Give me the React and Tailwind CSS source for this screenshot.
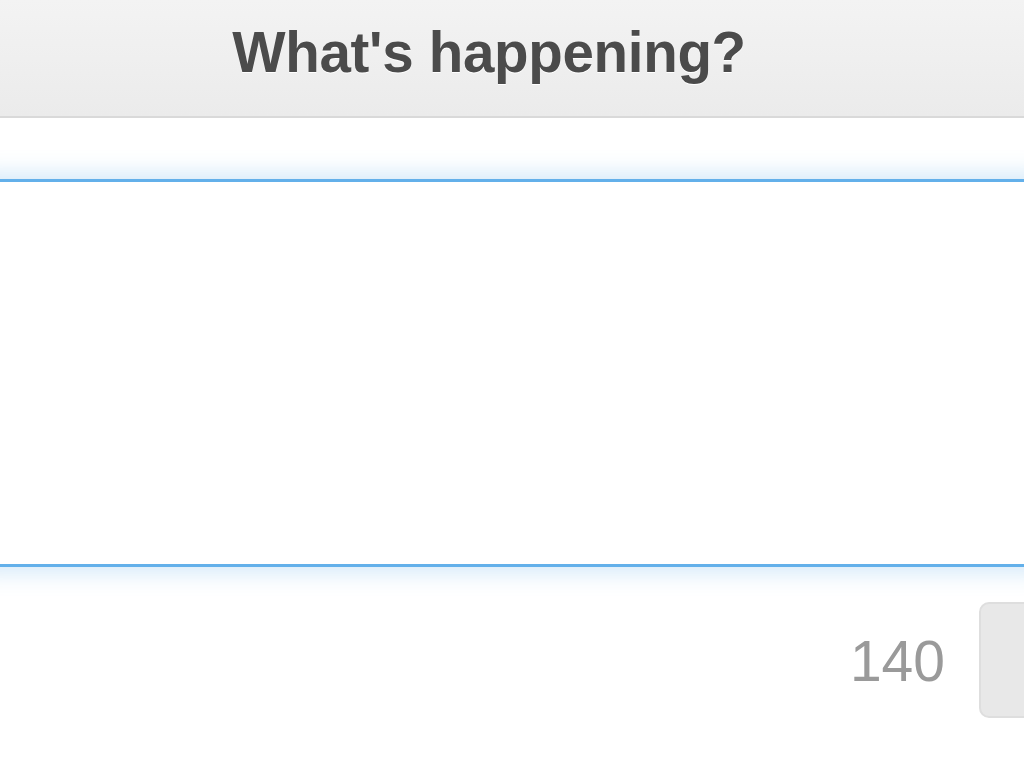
import React from "react";

export default function App() {
  return (
    <div className="w-[1024px] h-[768px] overflow-hidden bg-white font-['Liberation_Sans',Arial,sans-serif]">
      <div className="h-[118px] bg-gradient-to-b from-[#f3f3f3] to-[#ebebeb] border-b-2 border-[#d9d9d9] flex items-center justify-center pr-[46px]">
        <h1 className="text-[56.5px] font-bold text-[#4b4b4b] leading-none tracking-[-0.3px] mt-[-9px] [text-shadow:0_1px_0_#ffffff]">
          What's happening?
        </h1>
      </div>
      <div className="pt-[61px] -mx-[20px]">
        <textarea
          className="block w-[1064px] h-[388px] resize-none border-[3px] border-[#63b0ea] rounded-[6px] bg-white outline-none shadow-[0_0_22px_6px_rgba(99,176,234,0.28)]"
          defaultValue=""
        />
      </div>
      <div className="flex items-center justify-end gap-[34px] mt-[35px] -mr-[95px]">
        <span className="text-[57px] text-[#9a9a9a] leading-none mt-[2px]">140</span>
        <button className="w-[140px] h-[116px] rounded-[10px] bg-[#e8e8e8] border-2 border-[#dedede]"></button>
      </div>
    </div>
  );
}
